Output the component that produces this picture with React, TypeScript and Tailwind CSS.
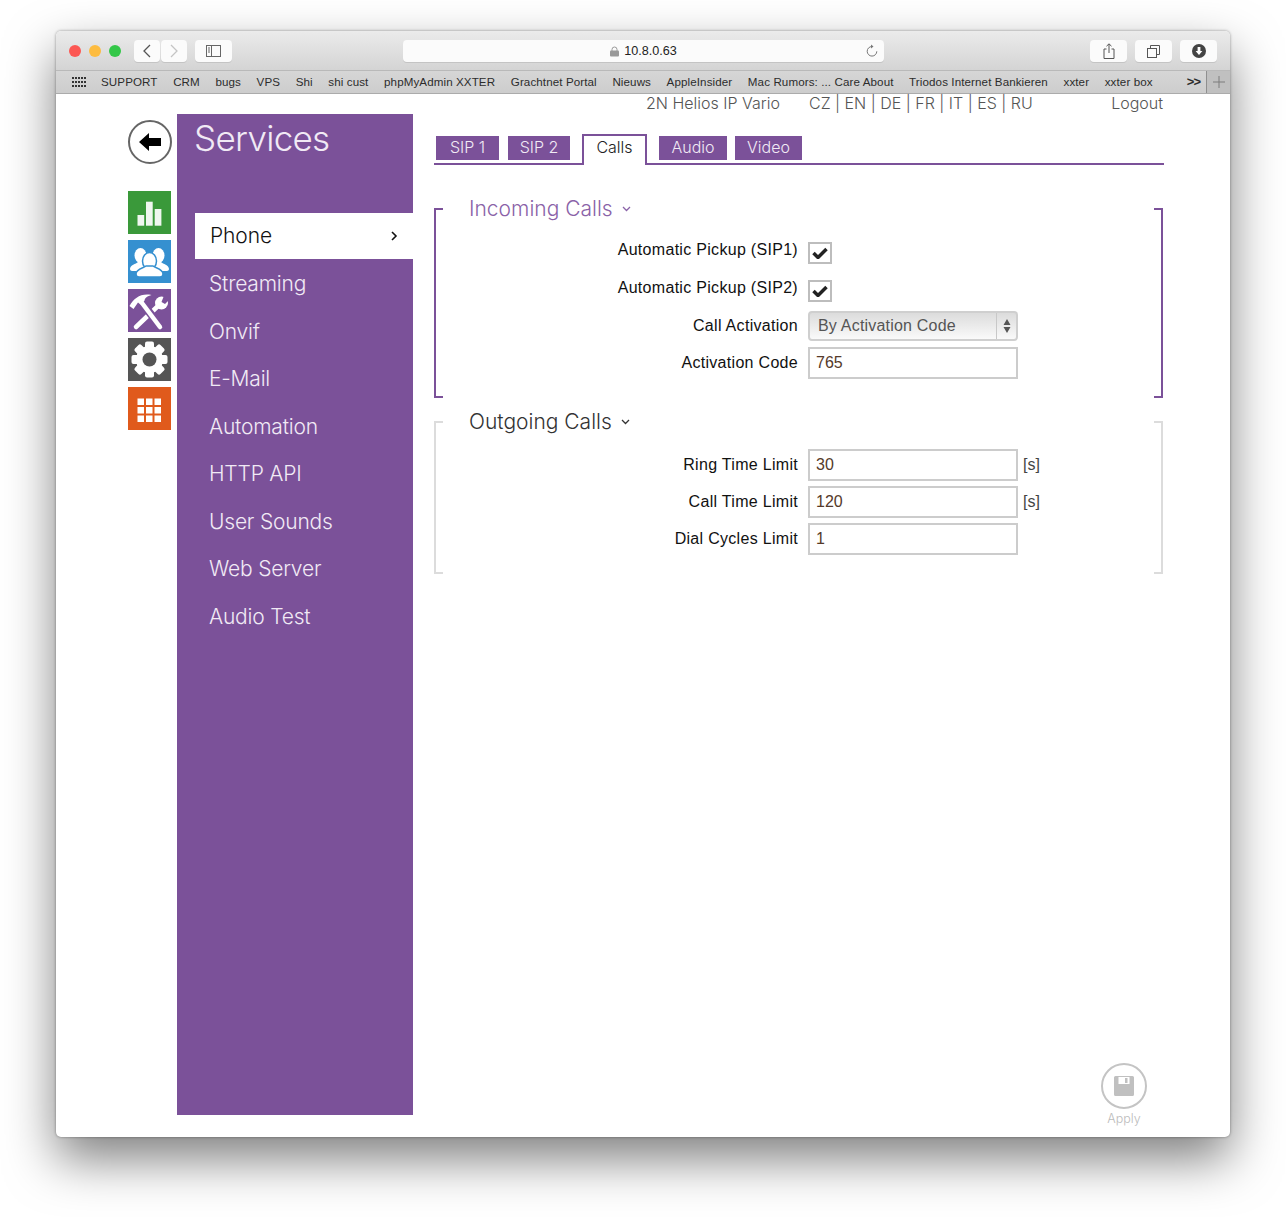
const bookmarks = ['SUPPORT', 'CRM', 'bugs', 'VPS', 'Shi', 'shi cust', 'phpMyAdmin XXTER', 'Grachtnet Portal', 'Nieuws', 'AppleInsider', 'Mac Rumors: ... Care About', 'Triodos Internet Bankieren', 'xxter', 'xxter box'];
const services = ['Streaming', 'Onvif', 'E-Mail', 'Automation', 'HTTP API', 'User Sounds', 'Web Server', 'Audio Test'];

function ToolButton({ className, children }: { className: string; children: React.ReactNode }) {
  return (
    <div className={`flex h-[22px] items-center justify-center rounded-[4px] bg-[#fbfbfb] shadow-[0_1px_0_#c4c4c4] ${className}`}>
      {children}
    </div>
  );
}

function Toolbar() {
  return (
    <div className="h-[40px] flex items-center border-b border-[#b9b9b9] bg-gradient-to-b from-[#ebebeb] to-[#d4d4d4] pl-[13px] pr-[13px] pt-px">
      <div className="flex gap-[8px]">
        <span className="h-3 w-3 rounded-full bg-[#fc5753]" />
        <span className="h-3 w-3 rounded-full bg-[#fdbc40]" />
        <span className="h-3 w-3 rounded-full bg-[#33c748]" />
      </div>
      <ToolButton className="ml-[13px] w-[26px]">
        <svg width="10" height="14" viewBox="0 0 10 14" fill="none" stroke="#555" strokeWidth="1.3"><path d="M8 1 2 7l6 6" /></svg>
      </ToolButton>
      <ToolButton className="ml-px w-[26px]">
        <svg width="10" height="14" viewBox="0 0 10 14" fill="none" stroke="#c4c4c4" strokeWidth="1.3"><path d="m2 1 6 6-6 6" /></svg>
      </ToolButton>
      <ToolButton className="ml-[8px] w-[37px]">
        <svg width="15" height="12" viewBox="0 0 15 12" fill="none" stroke="#666"><rect x=".5" y=".5" width="14" height="11" /><path d="M5.5 .5v11M2 3h2M2 5h2M2 7h2" /></svg>
      </ToolButton>
      <ToolButton className="relative ml-[171px] w-[481px]">
        <svg width="9" height="11" viewBox="0 0 9 11" className="mr-[5px]"><path d="M2 5V3.5a2.5 2.5 0 0 1 5 0V5" fill="none" stroke="#999" /><rect y="4.5" width="9" height="6" rx="1" fill="#999" /></svg>
        <span className="text-[12.6px] text-[#222] [font-family:'Liberation_Sans',sans-serif]">10.8.0.63</span>
        <svg width="14" height="14" viewBox="0 0 14 14" fill="none" stroke="#777" className="absolute right-[5px] top-[4px]"><path d="M7 2.5a4.8 4.8 0 1 0 4.8 4.8" /><path d="M6 .5 8.5 2.5 6 4.5" fill="#777" stroke="none" /></svg>
      </ToolButton>
      <ToolButton className="ml-auto w-[37px]">
        <svg width="12" height="16" viewBox="0 0 12 16" fill="none" stroke="#555"><path d="M3.5 6H1v9.5h10V6H8.5M6 10V1M3.5 3.2 6 .8l2.5 2.4" /></svg>
      </ToolButton>
      <ToolButton className="ml-[8px] w-[37px]">
        <svg width="13" height="13" viewBox="0 0 13 13" fill="none" stroke="#555"><rect x=".5" y="3.5" width="9" height="9" /><path d="M3.5 3.5v-3h9v9h-3" /></svg>
      </ToolButton>
      <ToolButton className="ml-[8px] w-[37px]">
        <svg width="14" height="14" viewBox="0 0 14 14"><circle cx="7" cy="7" r="7" fill="#444" /><path d="M5.6 3h2.8v4h2L7 11 3.6 7h2z" fill="#fff" /></svg>
      </ToolButton>
    </div>
  );
}

function BookmarksBar() {
  return (
    <div className="flex h-[23px] items-center border-b border-[#ababab] bg-gradient-to-b from-[#d6d6d6] to-[#cdcdcd] pl-[15px] text-[11.6px] tracking-[0.1px] text-[#2c2c2c] [font-family:'Liberation_Sans',sans-serif]">
      <svg width="16" height="12" viewBox="0 0 16 12" fill="#333" className="mr-[14px]">
        {[0, 4, 8].map((y) => [0, 3, 6, 9, 12].map((x) => <rect key={`${x}-${y}`} x={x + 1} y={y + 1} width="2" height="2" />))}
      </svg>
      <div className="flex gap-[15.6px] whitespace-nowrap">
        {bookmarks.map((b) => <span key={b}>{b}</span>)}
      </div>
      <span className="ml-auto mr-[6px] text-[13px] font-bold tracking-[-1px]">&gt;&gt;</span>
      <div className="flex h-full w-[24px] items-center justify-center border-l border-[#8f8f8f] bg-[#c0c0c0]">
        <svg width="12" height="12" viewBox="0 0 12 12" stroke="#7d7d7d"><path d="M6 0v12M0 6h12" /></svg>
      </div>
    </div>
  );
}

function Tile({ color, children }: { color: string; children: React.ReactNode }) {
  return <div className={`h-[43px] w-[43px] ${color}`}>{children}</div>;
}

function NavIcons() {
  return (
    <div className="flex w-[44px] flex-col">
      <div className="mt-[6px] mb-[27px] flex h-[44px] w-[44px] items-center justify-center rounded-full border-2 border-[#666] bg-white">
        <svg width="22" height="18" viewBox="0 0 22 18"><path d="M10 0 0 9l10 9v-5h12V5H10z" fill="#000" /></svg>
      </div>
      <div className="flex flex-col gap-[6px]">
        <Tile color="bg-[#3a993a]">
          <svg width="43" height="43" viewBox="0 0 43 43" fill="#fff" fillOpacity=".92"><rect x="9.500" y="24" width="6.700" height="10.700" /><rect x="18" y="10.700" width="6.700" height="24" /><rect x="26.700" y="18" width="6.700" height="16.700" /></svg>
        </Tile>
        <Tile color="bg-[#3590d0]">
          <svg width="43" height="43" viewBox="0 0 43 43" fill="#fff">
            <ellipse cx="12.500" cy="15.500" rx="6" ry="7.500" />
            <path d="M2 29c0-4 6-5 8-7h6v9H4c-1 0-2-1-2-2z" />
            <ellipse cx="30.500" cy="15.500" rx="6" ry="7.500" />
            <path d="M41 29c0-4-6-5-8-7h-6v9h12c1 0 2-1 2-2z" />
            <ellipse cx="21.500" cy="21" rx="7" ry="8.500" stroke="#3590d0" strokeWidth="1.500" />
            <path d="M8 34c0-5 8-6 10-8h7c2 2 10 3 10 8 0 2-1 3-3 3H11c-2 0-3-1-3-3z" stroke="#3590d0" strokeWidth="1.500" />
          </svg>
        </Tile>
        <Tile color="bg-[#7b5199]">
          <svg width="43" height="43" viewBox="0 0 43 43" fill="#fff">
            <path d="M8 38 30 17" stroke="#fff" strokeWidth="4.500" strokeLinecap="round" />
            <circle cx="33.500" cy="14" r="6.500" />
            <path d="M33.500 13 37 4l3.500 0 2.500 5-6 6z" fill="#7b5199" />
            <path d="M1.500 17C6 9 13 4 23.500 6c-4 1-7 3-7 6L13 16l-3-2.500-4.500 6.500z" />
            <path d="M14 14 33 38" stroke="#7b5199" strokeWidth="8" />
            <path d="M14 14 32 38" stroke="#fff" strokeWidth="4.500" strokeLinecap="round" />
          </svg>
        </Tile>
        <Tile color="bg-[#555555]">
          <svg width="43" height="43" viewBox="0 0 43 43">
            {[0, 45, 90, 135, 180, 225, 270, 315].map((deg) => (
              <rect key={deg} x="17" y="3.500" width="9" height="8" rx="2" fill="#fff" transform={`rotate(${deg} 21.500 21.500)`} />
            ))}
            <circle cx="21.500" cy="21.500" r="13.500" fill="#fff" />
            <circle cx="21.500" cy="21.500" r="7" fill="#555555" />
          </svg>
        </Tile>
        <Tile color="bg-[#e05a1c]">
          <svg width="43" height="43" viewBox="0 0 43 43" fill="#fff">
            {[11.500, 20, 28.500].map((y) => [9.500, 18, 26.500].map((x) => <rect key={`${x}-${y}`} x={x} y={y} width="6.500" height="6.500" />))}
          </svg>
        </Tile>
      </div>
    </div>
  );
}

function Sidebar() {
  return (
    <aside className="ml-[5px] h-[1001px] w-[236px] bg-[#7b5199] font-light text-[#f1eaf5] [font-family:Inter,sans-serif]">
      <h1 className="ml-[17px] mt-[2px] h-[97px] text-[35px] leading-[44px] tracking-[-0.7px]">Services</h1>
      <div className="ml-[18px] flex h-[46px] items-center justify-between bg-white pl-[15px] pr-[15px] text-[21px] tracking-[-0.1px] text-[#111]">
        <span>Phone</span>
        <svg width="7" height="10" viewBox="0 0 7 10" fill="none" stroke="#111" strokeWidth="1.600"><path d="m1 1 4 4-4 4" /></svg>
      </div>
      <div className="mt-[1px] flex flex-col">
        {services.map((s) => (
          <div key={s} className="flex h-[47.500px] items-center pl-[32px] text-[21px] tracking-[-0.2px]">{s}</div>
        ))}
      </div>
    </aside>
  );
}

function Tabs() {
  const plain = 'h-[24px] flex items-center justify-center bg-[#7b5199] pb-[2px] text-[16px] font-light text-[#f1eaf5]';
  return (
    <div className="flex h-[51px] items-end border-b-2 border-[#7b5199] pl-[2px] [font-family:Inter,sans-serif]">
      <div className={`${plain} mb-[3px] w-[63px]`}>SIP 1</div>
      <div className={`${plain} mb-[3px] ml-[9px] w-[62px]`}>SIP 2</div>
      <div className="relative top-[2px] ml-[12px] flex h-[31px] w-[65px] items-center justify-center border-x-2 border-t-2 border-[#7b5199] bg-white pb-[8px] text-[16px] font-light text-[#222]">Calls</div>
      <div className={`${plain} mb-[3px] ml-[12px] w-[68px]`}>Audio</div>
      <div className={`${plain} mb-[3px] ml-[8px] w-[67px]`}>Video</div>
    </div>
  );
}

function Field({ label, raised, children }: { label: string; raised?: boolean; children: React.ReactNode }) {
  return (
    <div className="flex items-center">
      <label className={`w-[372px] pr-[10px] text-right text-[16px] tracking-[0.3px] text-[#111] [font-family:'Liberation_Sans',sans-serif] ${raised ? 'mb-[6px]' : ''}`}>{label}</label>
      {children}
    </div>
  );
}

function Check() {
  return (
    <div className="flex h-[22px] w-[24px] items-center justify-center border-2 border-[#bdbdbd] bg-white">
      <svg width="16" height="12" viewBox="0 0 16 12"><path d="M1.500 6 6 10.500 14.500 2" fill="none" stroke="#222" strokeWidth="3.500" /></svg>
    </div>
  );
}

function TextInput({ value }: { value: string }) {
  return (
    <div className="flex h-[32px] w-[210px] items-center border-2 border-[#cccccc] bg-white pl-[6px] text-[16px] text-[#553a2a] [font-family:'Liberation_Sans',sans-serif]">
      {value}
    </div>
  );
}

function Group({ title, titleClass, sideClass, tickClass, height, children }: { title: string; titleClass: string; sideClass: string; tickClass: string; height: string; children: React.ReactNode }) {
  const tick = `absolute h-[2px] w-[7px] ${tickClass}`;
  return (
    <section className={`relative w-[729px] border-x-2 ${height} ${sideClass}`}>
      <span className={`${tick} left-0 top-0`} />
      <span className={`${tick} right-0 top-0`} />
      <span className={`${tick} left-0 bottom-0`} />
      <span className={`${tick} right-0 bottom-0`} />
      <h2 className={`-mt-[13px] ml-[33px] flex h-[27px] items-center gap-[9px] text-[21px] font-light [font-family:Inter,sans-serif] ${titleClass}`}>
        {title}
        <svg width="9" height="6" viewBox="0 0 9 6" fill="none" stroke="currentColor" strokeWidth="1.300"><path d="m1 1 3.500 3.500L8 1" /></svg>
      </h2>
      {children}
    </section>
  );
}

function SaveButton() {
  return (
    <div className="flex w-[46px] flex-col items-center self-end mr-[17px]">
      <div className="flex h-[46px] w-[46px] items-center justify-center rounded-full border-2 border-[#c4c4c4]">
        <svg width="20" height="20" viewBox="0 0 20 20"><path d="M1.500 0h17A1.500 1.500 0 0 1 20 1.500v17a1.500 1.500 0 0 1-1.500 1.500h-17A1.500 1.500 0 0 1 0 18.500v-17A1.500 1.500 0 0 1 1.500 0z" fill="#c0c0c0" /><rect x="4.500" y="1" width="11" height="7" fill="#fff" /><rect x="11" y="2" width="2.500" height="5" fill="#c0c0c0" /></svg>
      </div>
      <span className="mt-[1px] text-[12.500px] font-light text-[#bbb] [font-family:Inter,sans-serif]">Apply</span>
    </div>
  );
}

const unitClass = "ml-[5px] text-[16px] text-[#444] [font-family:'Liberation_Sans',sans-serif]";

function MainPanel() {
  return (
    <main className="ml-[21px] flex h-[1015px] w-[730px] flex-col">
      <Tabs />
      <div className="mt-[43px] flex flex-col gap-[23px]">
        <Group title="Incoming Calls" titleClass="text-[#8a62a8]" sideClass="border-[#7b5199]" tickClass="bg-[#7b5199]" height="h-[190px]">
          <div className="mt-[16px] flex flex-col">
            <div className="h-[38px]"><Field label="Automatic Pickup (SIP1)" raised><Check /></Field></div>
            <div className="h-[35px]"><Field label="Automatic Pickup (SIP2)" raised><Check /></Field></div>
            <div className="h-[36px]">
              <Field label="Call Activation">
                <div className="flex h-[30px] w-[210px] items-center rounded-[4px] border-2 border-[#cfcfcf] bg-gradient-to-b from-[#dcdcdc] to-[#fafafa] text-[16px] tracking-[0.2px] text-[#555] [font-family:'Liberation_Sans',sans-serif]">
                  <span className="flex-1 pl-[8px]">By Activation Code</span>
                  <div className="flex h-full w-[20px] items-center justify-center border-l border-[#c8c8c8]">
                    <svg width="8" height="14" viewBox="0 0 8 14" fill="#555"><path d="M4 0l3.500 6H.5zM4 14 .5 8h7z" /></svg>
                  </div>
                </div>
              </Field>
            </div>
            <Field label="Activation Code"><TextInput value="765" /></Field>
          </div>
        </Group>
        <Group title="Outgoing Calls" titleClass="text-[#333]" sideClass="border-[#dcdcdc]" tickClass="bg-[#dcdcdc]" height="h-[153px]">
          <div className="mt-[14px] flex flex-col gap-[5px]">
            <Field label="Ring Time Limit">
              <TextInput value="30" />
              <span className={unitClass}>[s]</span>
            </Field>
            <Field label="Call Time Limit">
              <TextInput value="120" />
              <span className={unitClass}>[s]</span>
            </Field>
            <Field label="Dial Cycles Limit"><TextInput value="1" /></Field>
          </div>
        </Group>
      </div>
      <div className="mt-auto flex flex-col"><SaveButton /></div>
    </main>
  );
}

export default function App() {
  return (
    <div className="h-[1217px] w-[1286px] overflow-hidden bg-white pl-[56px] pt-[31px]">
      <div className="h-[1106px] w-[1174px] overflow-hidden rounded-[5px] bg-white shadow-[0_22px_50px_rgba(0,0,0,0.5),0_0_3px_rgba(0,0,0,0.4)]">
        <Toolbar />
        <BookmarksBar />
        <div className="flex h-[20px] items-center pb-[2px] text-[16px] font-light text-[#555] [font-family:Inter,sans-serif] whitespace-nowrap">
          <span className="ml-[590px] w-[163px]">2N Helios IP Vario</span>
          <span>CZ | EN | DE | FR | IT | ES | RU</span>
          <span className="ml-auto mr-[67px]">Logout</span>
        </div>
        <div className="flex items-start pl-[72px]">
          <NavIcons />
          <Sidebar />
          <MainPanel />
        </div>
      </div>
    </div>
  );
}
